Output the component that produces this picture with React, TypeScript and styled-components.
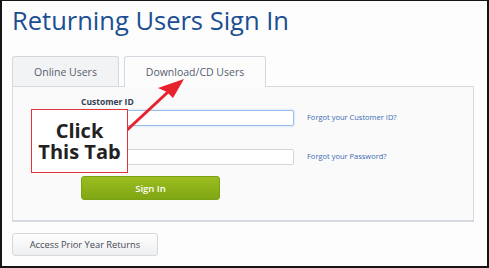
import styled, { createGlobalStyle } from 'styled-components';

const GlobalStyle = createGlobalStyle`
    body {
        margin: 0;
        font-family: 'Open Sans', 'Liberation Sans', sans-serif;
    }
`;

const Frame = styled.div`
    position: relative;
    box-sizing: border-box;
    width: 489px;
    height: 268px;
    border: 2px solid #151515;
    border-top-width: 1px;
    background: #fdfdfd;
    padding-left: 10px;
    display: flex;
    flex-direction: column;
    align-items: flex-start;
`;

const Title = styled.h1`
    margin: 1px 0 0;
    font-size: 25.5px;
    line-height: 36px;
    font-weight: 400;
    color: #1b4e92;
`;

const Tabs = styled.div`
    display: flex;
    align-items: flex-end;
    gap: 5px;
    margin-top: 18px;
    position: relative;
    z-index: 1;
`;

const Tab = styled.div<{ $active?: boolean; $width: number }>`
    box-sizing: border-box;
    width: ${({ $width }) => $width}px;
    height: ${({ $active }) => ($active ? 31 : 30)}px;
    margin-bottom: ${({ $active }) => ($active ? -1 : 0)}px;
    padding-bottom: ${({ $active }) => ($active ? 1 : 0)}px;
    border: 1px solid #d3d8de;
    border-bottom: none;
    border-radius: 3px 3px 0 0;
    background: ${({ $active }) => ($active ? '#fcfcfd' : '#f2f3f5')};
    display: flex;
    align-items: center;
    justify-content: center;
    font-size: 10.5px;
    color: #555e6c;
`;

const Panel = styled.div`
    box-sizing: border-box;
    width: 462px;
    height: 136px;
    border: 1px solid #d5dae0;
    border-bottom-width: 2px;
    background: #fafafb;
    padding: 9px 0 0 68px;
`;

const Form = styled.div`
    display: grid;
    grid-template-columns: 213px auto;
    column-gap: 13px;
    align-items: center;
`;

/* the password label sits under the callout in the picture, so its row stays empty */
const Label = styled.label<{ $gap?: number }>`
    grid-column: 1 / 3;
    height: 12px;
    font-size: 8.5px;
    line-height: 12px;
    font-weight: 700;
    color: #354052;
    margin-top: ${({ $gap }) => $gap ?? 0}px;
    margin-bottom: 2px;
`;

const Input = styled.div<{ $focus?: boolean }>`
    box-sizing: border-box;
    height: 16px;
    background: #fff;
    border: 1px solid ${({ $focus }) => ($focus ? '#98c1ea' : '#d2d6db')};
    border-radius: 2px;
    box-shadow: ${({ $focus }) => ($focus ? '0 0 2px rgba(120, 170, 230, 0.6)' : 'none')};
`;

const Link = styled.a`
    font-size: 7.5px;
    color: #3b6bb3;
    text-decoration: none;
    margin-top: -3px;
`;

const SignIn = styled.button`
    grid-column: 1;
    justify-self: start;
    margin-top: 11px;
    width: 139px;
    height: 24px;
    border: 1px solid #7aa212;
    border-radius: 3px;
    background: linear-gradient(#9cbd20, #7fa614);
    color: #fff;
    font-family: 'Open Sans', 'Liberation Sans', sans-serif;
    font-size: 9.5px;
    font-weight: 600;
    padding: 0;
`;

const PriorButton = styled.button`
    margin-top: 11px;
    width: 146px;
    height: 23px;
    border: 1px solid #d6d8db;
    border-radius: 3px;
    background: linear-gradient(#fefefe, #eeeff0);
    color: #444a52;
    font-family: 'Open Sans', 'Liberation Sans', sans-serif;
    font-size: 9.3px;
    padding: 0;
`;

const Callout = styled.div`
    position: absolute;
    left: 29px;
    top: 108px;
    box-sizing: border-box;
    width: 97px;
    height: 64px;
    border: 1px solid #e0343e;
    background: #fff;
    display: flex;
    align-items: center;
    justify-content: center;
    text-align: center;
    font-size: 20px;
    line-height: 21px;
    font-weight: 700;
    color: #222;
    z-index: 3;
`;

const ArrowLayer = styled.svg`
    position: absolute;
    left: -2px;
    top: -1px;
    z-index: 2;
    pointer-events: none;
`;

export default function App() {
    return (
        <>
            <GlobalStyle />
            <Frame>
                <Title>Returning Users Sign In</Title>
                <Tabs>
                    <Tab $width={107}>Online Users</Tab>
                    <Tab $width={142} $active>
                        Download/CD Users
                    </Tab>
                </Tabs>
                <Panel>
                    <Form>
                        <Label>Customer ID</Label>
                        <Input $focus />
                        <Link>Forgot your Customer ID?</Link>
                        <Label $gap={9} />
                        <Input />
                        <Link>Forgot your Password?</Link>
                        <SignIn>Sign In</SignIn>
                    </Form>
                </Panel>
                <PriorButton>Access Prior Year Returns</PriorButton>

                <Callout>
                    Click
                    <br />
                    This Tab
                </Callout>
                <ArrowLayer width="489" height="268" viewBox="0 0 489 268">
                    <line x1="126" y1="131" x2="168" y2="92" stroke="#e8222c" strokeWidth="3" />
                    <polygon points="184,79 158,88 167,92 173,98" fill="#e8222c" />
                </ArrowLayer>
            </Frame>
        </>
    );
}
